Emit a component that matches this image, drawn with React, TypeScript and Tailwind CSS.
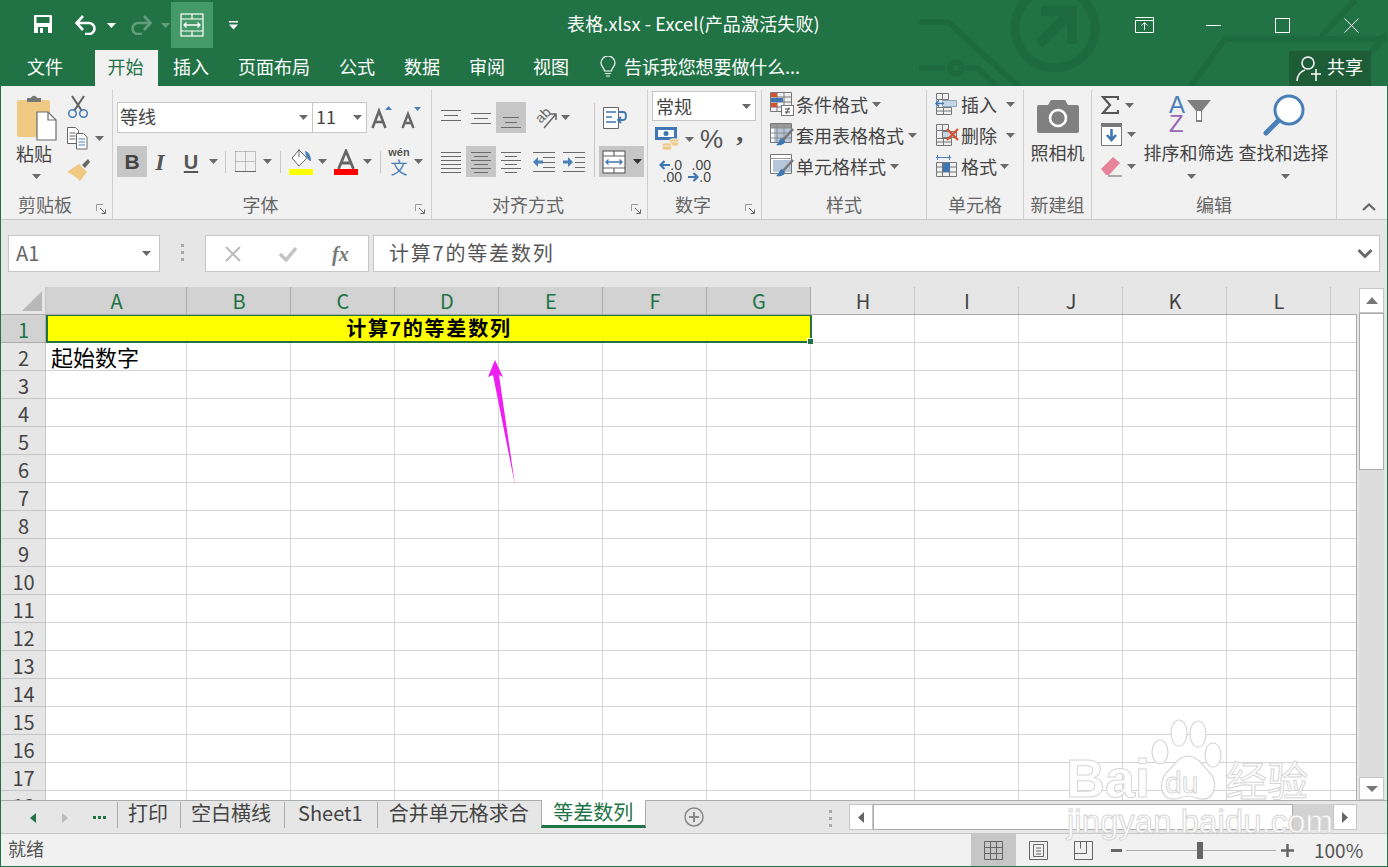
import type { ReactNode } from 'react';

const GREEN = '#217346';

const Caret = ({ className = '', light = false, dark = false }: { className?: string; light?: boolean; dark?: boolean }) => (
  <svg width="9" height="5" viewBox="0 0 9 5" className={`shrink-0 ${className}`}>
    <path d="M0 0h9L4.500 5z" fill={light ? '#ffffff' : dark ? '#333333' : '#6a6a6a'} />
  </svg>
);

const Launcher = () => (
  <svg width="11" height="11" viewBox="0 0 11 11" className="absolute right-[5px] bottom-[4px]" fill="none">
    <path d="M.5 7V.5H7" stroke="#9a9a9a" />
    <path d="M4 4l5 5M5.500 9.500h4v-4" stroke="#666" />
  </svg>
);

const Group = ({ w, label, launcher, children }: { w: string; label: string; launcher?: boolean; children: ReactNode }) => (
  <div className={`relative flex flex-col shrink-0 border-r border-[#cfcfcf] ${w}`}>
    <div className="h-[103px]">{children}</div>
    <div className={`h-[22px] flex items-center justify-center text-[#666] ${launcher ? 'pr-[23px]' : ''}`}>{label}</div>
    {launcher && <Launcher />}
  </div>
);

const MergeIcon = ({ color = '#fff', arrow = '#fff' }: { color?: string; arrow?: string }) => (
  <svg width="24" height="24" viewBox="0 0 24 24" fill="none" className="shrink-0">
    <rect x="1" y="1" width="22" height="22" stroke={color} fill="#fff" fillOpacity={color === '#fff' ? 0 : 1} strokeWidth="1.200" />
    <path d="M1 6h22M1 18h22M12 1v5M12 18v5" stroke={color} strokeWidth="1.200" />
    <path d="M4 12h16M6.500 9.500 4 12l2.500 2.500M17.500 9.500 20 12l-2.500 2.500" stroke={arrow} strokeWidth="1.300" />
  </svg>
);

const Lines = ({ rows }: { rows: [number, number][] }) => (
  <svg width="20" height="22" viewBox="0 0 20 22" fill="none" className="shrink-0">
    {rows.map(([y, x]) => (
      <path key={y} d={`M${x} ${y + 0.5}H${20 - x}`} stroke="#6b6b6b" />
    ))}
  </svg>
);

const Indent = ({ flip = false }: { flip?: boolean }) => (
  <svg width="22" height="22" viewBox="0 0 22 22" fill="none" className="shrink-0">
    <path d={flip ? 'M0 1.500h22M12 6.500h10M12 11.500h10M12 16.500h10M0 20.500h22' : 'M0 1.500h22M10 6.500h12M10 11.500h12M10 16.500h12M0 20.500h22'} stroke="#6b6b6b" />
    <path d={flip ? 'M0 9.500h5V6l5 5-5 5v-3.500H0z' : 'M10 9.500H5V6l-5 5 5 5v-3.500h5z'} fill="#4a7fb8" />
  </svg>
);

const CellIcon = ({ kind }: { kind: 'insert' | 'delete' | 'format' }) => (
  <svg width="24" height="24" viewBox="0 0 24 24" fill="none" className="shrink-0">
    {kind === 'format' ? (
      <>
        <path d="M1 3.500h15M2.500 1v5M14.500 1v5" stroke="#4a7fb8" />
        <path d="M1.500 8.500h20v14h-20zM1.500 13h20M1.500 18h20M7.500 8.500v14M14.500 8.500v14" stroke="#777" />
        <rect x="8" y="9" width="7" height="9" fill="#3f76b4" />
      </>
    ) : (
      <>
        <path d="M1.500 1.500h12v6h-12zM7.500 1.500v6M1.500 15.500h15v7h-15zM1.500 19h15M8.500 15.500v7" stroke="#777" />
        <path d="M7.500 8.500h14v6h-14zM1.500 8v7" stroke={kind === 'insert' ? '#8aa8c8' : '#777'} fill="#c6d6e6" />
        {kind === 'insert' && <path d="M1 11.500h8M4 8.500l-3 3 3 3" stroke="#3f76b4" strokeWidth="1.500" />}
        {kind === 'delete' && <path d="M12 6l11 11M23 6 12 17" stroke="#d8502f" strokeWidth="2.200" />}
      </>
    )}
  </svg>
);

const StyleIcon = ({ kind }: { kind: 'cond' | 'table' | 'cell' }) => (
  <svg width="24" height="24" viewBox="0 0 24 24" fill="none" className="shrink-0">
    {kind === 'cond' && (
      <>
        <path d="M.5.500h21v19H.5zM.5 5h21M.5 10h21M.5 15h21M7 .5v19M14 .5v19" stroke="#777" />
        <rect x="1" y="1" width="6" height="4" fill="#d8502f" />
        <rect x="1" y="6" width="12" height="4" fill="#3f76b4" />
        <rect x="1" y="11" width="6" height="4" fill="#d8502f" />
        <rect x="11.500" y="13.500" width="12" height="10" fill="#fff" stroke="#777" />
        <path d="M15 17h5M15 20h5M19 15.500l-3 6.500" stroke="#444" />
      </>
    )}
    {kind === 'table' && (
      <>
        <path d="M.5.500h21v19H.5z" stroke="#777" fill="#fff" />
        <rect x="1" y="1" width="20" height="4" fill="#999" />
        <rect x="4" y="5" width="17" height="14" fill="#b6c6da" />
        <path d="M.5 5h21M.5 10h21M.5 15h21M7 .5v19M14 .5v19" stroke="#8b8b8b" />
        <path d="M23 6 13 17" stroke="#777" strokeWidth="2.500" />
        <path d="M12 15c-3 1-3 5-6 7 5 1 9-1 9-4z" fill="#3f76b4" />
      </>
    )}
    {kind === 'cell' && (
      <>
        <path d="M.5.500h21v19H.5z" stroke="#777" fill="#fff" />
        <path d="M.5 4.500h21" stroke="#999" />
        <rect x="3" y="6" width="18" height="12" fill="#b6c6da" />
        <path d="M23 6 13 17" stroke="#777" strokeWidth="2.500" />
        <path d="M12 15c-3 1-3 5-6 7 5 1 9-1 9-4z" fill="#3f76b4" />
      </>
    )}
  </svg>
);

const Sep = ({ className = '' }: { className?: string }) => <div className={`w-px shrink-0 bg-[#c6c6c6] ${className}`} />;

const ClipboardGroup = () => (
  <Group w="w-[112px]" label="剪贴板" launcher>
    <div className="flex pl-[15px]">
      <div className="w-[44px] flex flex-col items-start pt-[5px]">
        <svg width="42" height="46" viewBox="0 0 42 46" fill="none" className="shrink-0">
          <rect x="1" y="5" width="33" height="37" rx="2" fill="#f0c983" />
          <path d="M11 7V3h4c1-3 5-3 6 0h4v4z" fill="#777" />
          <path d="M21 17h11l8 8v20H21z" fill="#fff" stroke="#6b6b6b" strokeWidth="1.200" />
          <path d="M32 17v8h8" stroke="#6b6b6b" strokeWidth="1.200" />
        </svg>
        <div className="h-[22px] leading-[24px] text-[#444]">粘贴</div>
        <Caret className="mt-[11px] ml-[16px]" />
      </div>
      <div className="ml-[7px] pt-[5px] flex flex-col">
        <svg width="22" height="23" viewBox="0 0 22 23" fill="none">
          <path d="M5 1l10 15M17 1 7 16" stroke="#666" strokeWidth="2.200" />
          <circle cx="5.500" cy="18.500" r="3.800" stroke="#4a7fb8" strokeWidth="1.600" />
          <circle cx="16.500" cy="18.500" r="3.800" stroke="#4a7fb8" strokeWidth="1.600" />
        </svg>
        <div className="mt-[9px] flex items-center">
          <svg width="21" height="23" viewBox="0 0 21 23" fill="none">
            <path d="M.5.500h8l3 3v13H.5zM2.500 6h6M2.500 9h6M2.500 12h6" stroke="#666" fill="#fff" />
            <path d="M9.500 6.500h7l3.500 3.500v12H9.500z" stroke="#666" fill="#fff" />
            <path d="M11.500 12h6.500M11.500 15h6.500M11.500 18h6.500" stroke="#4a7fb8" />
          </svg>
          <Caret className="ml-[7px]" />
        </div>
        <svg width="24" height="22" viewBox="0 0 24 22" fill="none" className="mt-[9px]">
          <path d="M15 6l6-6 2 3-5 6z" fill="#666" />
          <path d="M0 13 12 5l8 8-7 9C10 19 5 15 0 13z" fill="#f0c983" />
        </svg>
      </div>
    </div>
  </Group>
);

const FontGroup = () => (
  <Group w="w-[319px]" label="字体" launcher>
    <div className="pl-[4px] pt-[12px]">
      <div className="flex items-center h-[31px]">
        <div className="w-[196px] h-[31px] bg-white border border-[#c6c6c6] flex items-center pl-[2px] pr-[4px] justify-between text-[#444]">
          <span className="-mt-[2px]">等线</span>
          <Caret />
        </div>
        <div className="w-[55px] -ml-px h-[31px] bg-white border border-[#c6c6c6] flex items-center pl-[3px] pr-[4px] justify-between text-[#444]">
          <span className="-mt-[2px]">11</span>
          <Caret />
        </div>
        <svg width="22" height="24" viewBox="0 0 22 24" className="ml-[4px] shrink-0" fill="none">
          <path d="M1.500 22 8 5l6.500 17M4 16h8" stroke="#666" strokeWidth="2.600" />
          <path d="M14 4l3.500-4L21 4z" fill="#4a7fb8" />
        </svg>
        <svg width="22" height="22" viewBox="0 0 22 22" className="ml-[8px] shrink-0" fill="none">
          <path d="M1.500 21 7 7l5.500 14M3.500 16h7" stroke="#666" strokeWidth="2.400" />
          <path d="M13 0h7l-3.500 4z" fill="#4a7fb8" />
        </svg>
      </div>
      <div className="flex items-center h-[31px] mt-[13px]">
        <div className="w-[30px] h-[31px] bg-[#c6c6c6] flex items-center justify-center font-bold text-[#444] text-[21px] font-['Liberation_Sans',sans-serif]">B</div>
        <div className="w-[26px] text-center italic font-bold text-[#555] text-[24px] leading-none font-['Liberation_Serif',serif]">I</div>
        <div className="w-[36px] text-center text-[#555] text-[20px] font-bold font-['Liberation_Sans',sans-serif] underline underline-offset-2">U</div>
        <Caret />
        <Sep className="ml-[7px] h-[22px]" />
        <svg width="21" height="21" viewBox="0 0 21 21" fill="none" className="ml-[9px] shrink-0">
          <path d="M.5.500h20M.5 10.500h20M10.500.5v20M.5.5v20M20.500.5v20" stroke="#888" strokeDasharray="1 1" />
          <path d="M0 20.500h21" stroke="#666" />
        </svg>
        <Caret className="ml-[7px]" />
        <Sep className="ml-[8px] h-[22px]" />
        <div className="ml-[8px] w-[24px] flex flex-col items-center">
          <svg width="24" height="20" viewBox="0 0 24 20" fill="none">
            <path d="M10 1 3 9l7 8 8-8z" fill="#fff" stroke="#666" />
            <path d="M10 0v8" stroke="#666" />
            <path d="M16 2c4 1 6 5 6 10-3 0-3-3-5-5z" fill="#4a7fb8" />
          </svg>
          <div className="w-[24px] h-[6px] bg-[#ffff00]" />
        </div>
        <Caret className="ml-[5px]" />
        <div className="ml-[7px] w-[24px] flex flex-col items-center">
          <svg width="20" height="20" viewBox="0 0 20 20" fill="none">
            <path d="M2.500 20 10 2l7.500 18M5 14h10" stroke="#666" strokeWidth="2.800" />
          </svg>
          <div className="w-[24px] h-[6px] bg-[#ff0000]" />
        </div>
        <Caret className="ml-[5px]" />
        <Sep className="ml-[8px] h-[22px]" />
        <div className="ml-[6px] w-[24px] flex flex-col items-center leading-none">
          <span className="text-[11px] text-[#555] font-bold leading-[11px] font-['Liberation_Sans',sans-serif]">wén</span>
          <span className="text-[17px] text-[#4a7fb8] leading-[18px]">文</span>
        </div>
        <Caret className="ml-[3px]" />
      </div>
    </div>
  </Group>
);

const AlignGroup = () => (
  <Group w="w-[216px]" label="对齐方式" launcher>
    <div className="flex pt-[12px]">
      <div className="w-[162px] pl-[9px] shrink-0">
        <div className="flex items-center h-[31px]">
          <div className="w-[20px]"><Lines rows={[[3, 0], [8, 3], [13, 0]]} /></div>
          <div className="w-[20px] ml-[10px]"><Lines rows={[[6, 0], [11, 3], [16, 0]]} /></div>
          <div className="w-[30px] h-[31px] ml-[5px] bg-[#c6c6c6] flex items-center justify-center"><Lines rows={[[10, 2], [15, 4], [20, 0]]} /></div>
          <div className="relative ml-[9px] w-[22px] h-[22px] shrink-0">
            <span className="absolute left-[0px] top-[0px] -rotate-45 text-[14px] leading-[16px] text-[#666] font-['Liberation_Sans',sans-serif]">ab</span>
            <svg width="22" height="22" viewBox="0 0 22 22" fill="none" className="absolute inset-0">
              <path d="M9 21 21 7M15 7h6v6" stroke="#666" strokeWidth="1.500" />
            </svg>
          </div>
          <Caret className="ml-[4px]" />
        </div>
        <div className="flex items-center h-[31px] mt-[13px]">
          <Lines rows={[[1, 0], [5, 0], [9, 0], [13, 0], [17, 0], [21, 0]]} />
          <div className="w-[30px] h-[31px] ml-[5px] bg-[#c6c6c6] flex items-center justify-center">
            <Lines rows={[[1, 0], [5, 3], [9, 0], [13, 3], [17, 0], [21, 3]]} />
          </div>
          <div className="ml-[5px]"><Lines rows={[[1, 0], [5, 4], [9, 0], [13, 4], [17, 0], [21, 4]]} /></div>
          <div className="ml-[12px]"><Indent /></div>
          <div className="ml-[8px]"><Indent flip /></div>
        </div>
      </div>
      <Sep className="h-[74px] mt-[1px]" />
      <div className="ml-[4px] flex flex-col items-start">
        <svg width="24" height="24" viewBox="0 0 24 24" fill="none" className="ml-[4px] mt-[4px]">
          <path d="M.5 1.500h15v21H.5z" stroke="#666" fill="#fff" />
          <path d="M3 6h10M3 11h6M3 16h10" stroke="#3f76b4" strokeWidth="1.500" />
          <path d="M15 6h5c4 0 4 8 0 8h-5M18 11l-3 3 3 3" stroke="#3f76b4" strokeWidth="1.800" />
        </svg>
        <div className="w-[45px] h-[31px] mt-[16px] bg-[#c6c6c6] flex items-center pl-[3px]">
          <MergeIcon color="#666" arrow="#3f76b4" />
          <Caret dark className="ml-[7px]" />
        </div>
      </div>
    </div>
  </Group>
);

const DecimalArrow = ({ flip = false }: { flip?: boolean }) => (
  <svg width="11" height="10" viewBox="0 0 11 10" fill="none" className="shrink-0" stroke="#3f76b4" strokeWidth="2.200">
    <path d={flip ? 'M0 5h9M5.500 1 9.500 5l-4 4' : 'M11 5H2M5.500 1 1.500 5l4 4'} />
  </svg>
);

const NumberGroup = () => (
  <Group w="w-[114px]" label="数字" launcher>
    <div className="pl-[4px] pt-[1px]">
      <div className="w-[104px] h-[30px] bg-white border border-[#c6c6c6] flex items-center justify-between pl-[3px] pr-[4px] text-[#444]">
        常规
        <Caret />
      </div>
      <div className="flex items-center h-[26px] mt-[5px]">
        <svg width="25" height="24" viewBox="0 0 25 24" fill="none" className="ml-[3px] shrink-0">
          <rect x="0" y="0" width="22" height="13" fill="#3f76b4" />
          <rect x="3" y="3" width="16" height="7" fill="#fff" />
          <circle cx="11" cy="6.500" r="2.500" fill="#3f76b4" />
          <ellipse cx="19" cy="14" rx="5" ry="2.200" fill="#f0c983" stroke="#f1f1f1" />
          <ellipse cx="19" cy="17" rx="5" ry="2.200" fill="#f0c983" stroke="#f1f1f1" />
          <ellipse cx="12" cy="18" rx="5" ry="2.200" fill="#f0c983" stroke="#f1f1f1" />
          <ellipse cx="12" cy="21" rx="5" ry="2.200" fill="#f0c983" stroke="#f1f1f1" />
        </svg>
        <Caret className="ml-[5px]" />
        <span className="ml-[6px] text-[26px] leading-[26px] text-[#555] font-['Liberation_Sans',sans-serif]">%</span>
        <span className="ml-[13px] -mt-[14px] text-[28px] leading-[26px] font-bold text-[#555] font-['Liberation_Serif',serif]">,</span>
      </div>
      <div className="flex mt-[7px] text-[14px] leading-[12px] text-[#444] font-['Liberation_Sans',sans-serif]">
        <div className="ml-[4px] w-[26px] flex flex-col items-end">
          <div className="flex items-center h-[12px]"><DecimalArrow />.0</div>
          <div className="h-[12px]">.00</div>
        </div>
        <div className="ml-[5px] w-[24px] flex flex-col items-end">
          <div className="h-[12px]">.00</div>
          <div className="flex items-center h-[12px]"><DecimalArrow flip />.0</div>
        </div>
      </div>
    </div>
  </Group>
);

const StylesGroup = () => (
  <Group w="w-[165px]" label="样式">
    <div className="pl-[8px] pt-[2px] flex flex-col gap-[7px] text-[#444]">
      <div className="flex items-center h-[24px]"><StyleIcon kind="cond" /><span className="ml-[2px]">条件格式</span><Caret className="ml-[4px]" /></div>
      <div className="flex items-center h-[24px]"><StyleIcon kind="table" /><span className="ml-[2px]">套用表格格式</span><Caret className="ml-[4px]" /></div>
      <div className="flex items-center h-[24px]"><StyleIcon kind="cell" /><span className="ml-[2px]">单元格样式</span><Caret className="ml-[4px]" /></div>
    </div>
  </Group>
);

const CellsGroup = () => (
  <Group w="w-[97px]" label="单元格">
    <div className="pl-[8px] pt-[2px] flex flex-col gap-[7px] text-[#444]">
      <div className="flex items-center h-[24px]"><CellIcon kind="insert" /><span className="ml-[2px]">插入</span><Caret className="ml-[9px]" /></div>
      <div className="flex items-center h-[24px]"><CellIcon kind="delete" /><span className="ml-[2px]">删除</span><Caret className="ml-[9px]" /></div>
      <div className="flex items-center h-[24px]"><CellIcon kind="format" /><span className="ml-[2px]">格式</span><Caret className="ml-[3px]" /></div>
    </div>
  </Group>
);

const CameraGroup = () => (
  <Group w="w-[68px]" label="新建组">
    <div className="flex flex-col items-center pt-[10px] text-[#444]">
      <svg width="42" height="33" viewBox="0 0 42 33" fill="none">
        <path d="M2 5h9l3-5h14l3 5h9a2 2 0 0 1 2 2v24a2 2 0 0 1-2 2H2a2 2 0 0 1-2-2V7a2 2 0 0 1 2-2z" fill="#808080" />
        <circle cx="21" cy="18" r="8" fill="none" stroke="#fff" strokeWidth="2.600" />
      </svg>
      <span className="mt-[8px] h-[22px] leading-[22px]">照相机</span>
    </div>
  </Group>
);

const EditGroup = () => (
  <Group w="w-[245px]" label="编辑">
    <div className="flex text-[#444]">
      <div className="pl-[9px] pt-[5px] w-[50px] shrink-0">
        <div className="flex items-center h-[20px]">
          <svg width="18" height="18" viewBox="0 0 18 18" fill="none"><path d="M17 4V1H2l7 8-7 8h15v-3" stroke="#555" strokeWidth="2.200" /></svg>
          <Caret className="ml-[6px]" />
        </div>
        <div className="flex items-center mt-[8px] h-[23px]">
          <svg width="22" height="23" viewBox="0 0 22 23" fill="none">
            <path d="M.5 3.500h20v19H.5z" fill="#fff" stroke="#777" />
            <rect x="0" y="0" width="21" height="3" fill="#777" />
            <path d="M10.500 6v11M6 12l4.500 5 4.500-5" stroke="#3f76b4" strokeWidth="2.600" />
          </svg>
          <Caret className="ml-[4px]" />
        </div>
        <div className="flex items-center mt-[9px] h-[22px]">
          <svg width="21" height="21" viewBox="0 0 21 21" fill="none">
            <path d="M0 13 12 1l7 6L8 19H5z" fill="#e8849a" />
            <path d="M7 20h14" stroke="#666" />
          </svg>
          <Caret className="ml-[5px]" />
        </div>
      </div>
      <div className="w-[93px] flex flex-col items-center pt-[4px] shrink-0">
        <div className="flex items-center h-[40px] pl-[3px]">
          <div className="flex flex-col leading-[19px] text-[24px] font-['Liberation_Sans',sans-serif]">
            <span className="text-[#4a7fb8]">A</span>
            <span className="text-[#9b65b5]">Z</span>
          </div>
          <svg width="24" height="24" viewBox="0 0 24 24" className="ml-[2px] mb-[6px]" fill="#808080"><path d="M0 1h24l-9 11v11H9V12z" /><path d="M10 12h4v9h-4z" fill="#fff" /></svg>
        </div>
        <span className="mt-[7px] h-[22px] leading-[22px] whitespace-nowrap">排序和筛选</span>
        <Caret className="mt-[11px] ml-[6px]" />
      </div>
      <div className="w-[95px] flex flex-col items-center pt-[4px] shrink-0">
        <svg width="42" height="42" viewBox="0 0 42 42" fill="none" className="ml-[2px]">
          <circle cx="26" cy="16" r="14" fill="#fff" stroke="#4a7fb8" strokeWidth="3" />
          <path d="M15 27 3 39" stroke="#4a7fb8" strokeWidth="5" strokeLinecap="round" />
        </svg>
        <span className="mt-[5px] ml-[2px] h-[22px] leading-[22px] whitespace-nowrap">查找和选择</span>
        <Caret className="mt-[11px] ml-[6px]" />
      </div>
    </div>
  </Group>
);

const Ribbon = () => (
  <div className="h-[134px] shrink-0 bg-[#f1f1f1] border-b border-[#c6c6c6] pt-[4px] flex text-[18px] relative">
    <ClipboardGroup />
    <FontGroup />
    <AlignGroup />
    <NumberGroup />
    <StylesGroup />
    <CellsGroup />
    <CameraGroup />
    <EditGroup />
    <svg width="14" height="8" viewBox="0 0 14 8" fill="none" className="ml-[25px] mt-[113px]">
      <path d="M1 7l6-5.500L13 7" stroke="#666" strokeWidth="2.200" />
    </svg>
  </div>
);

const Header = () => (
  <div className="relative h-[86px] shrink-0 overflow-hidden text-white text-[18px]" style={{ backgroundColor: GREEN }}>
    <svg width="468" height="86" viewBox="920 0 468 86" fill="none" className="absolute right-0 top-0" stroke="#1e6a40" strokeWidth="6">
      <circle cx="1056" cy="28" r="40" strokeWidth="9" />
      <path d="M1042 11h31v33" strokeWidth="10" />
      <path d="M1073 11l-33 33" strokeWidth="10" />
      <path d="M920 22h29l70 64" />
      <path d="M920 68h26M966 68h12l20 18" />
      <circle cx="957" cy="68" r="6" />
      <path d="M1192 86l34-47h162" />
      <path d="M1320 39l36-39M1342 86l46-52" />
    </svg>
    <div className="relative flex items-center h-[50px]">
      <svg width="20" height="20" viewBox="0 0 20 20" className="ml-[32px] -mt-[3px] shrink-0">
        <path d="M1 2a1 1 0 0 1 1-1h16a1 1 0 0 1 1 1v17H1z" fill="#fff" />
        <rect x="3.500" y="3" width="13" height="6" fill={GREEN} />
        <rect x="5" y="13" width="10" height="6" fill={GREEN} />
        <rect x="7" y="14" width="3" height="5" fill="#fff" />
      </svg>
      <svg width="22" height="20" viewBox="0 0 22 20" fill="none" className="ml-[22px] shrink-0">
        <path d="M2 8h12a5.500 5.500 0 0 1 0 11h-4" stroke="#fff" strokeWidth="2.600" />
        <path d="M8 1 1.500 8 8 15" stroke="#fff" strokeWidth="2.600" />
      </svg>
      <Caret light className="ml-[10px]" />
      <svg width="22" height="20" viewBox="0 0 22 20" fill="none" className="ml-[14px] shrink-0 opacity-30">
        <path d="M20 8H8a5.500 5.500 0 0 0 0 11h4" stroke="#fff" strokeWidth="2.600" />
        <path d="M14 1l6.500 7L14 15" stroke="#fff" strokeWidth="2.600" />
      </svg>
      <Caret light className="ml-[9px] opacity-30" />
      <div className="ml-[1px] w-[42px] h-[46px] bg-[#459a6a] flex items-center justify-center shrink-0">
        <MergeIcon />
      </div>
      <svg width="9" height="9" viewBox="0 0 9 9" className="ml-[16px] shrink-0" fill="#fff">
        <rect x="0" y="0" width="9" height="1.500" />
        <path d="M0 3.500h9L4.500 8.500z" />
      </svg>
      <div className="ml-[329px] -mt-[3px] whitespace-nowrap tracking-[0.15px]">表格.xlsx - Excel(产品激活失败)</div>
      <svg width="20" height="16" viewBox="0 0 20 16" fill="none" className="ml-auto shrink-0" stroke="#fff">
        <path d="M.5 3.500h18v12H.5zM.5.500h18v3M9.500 13V6M6.500 8.500l3-3 3 3" />
      </svg>
      <div className="ml-[51px] w-[15px] h-px bg-white shrink-0" />
      <div className="ml-[54px] w-[15px] h-[15px] border border-white shrink-0" />
      <svg width="15" height="15" viewBox="0 0 15 15" fill="none" className="ml-[54px] mr-[28px] shrink-0" stroke="#fff">
        <path d="M.5.500l14 14M14.500.5l-14 14" />
      </svg>
    </div>
    <div className="relative flex h-[36px] items-center">
      <span className="ml-[26px] mb-[3px]">文件</span>
      <div className="ml-[32px] w-[63px] h-[36px] bg-[#f1f1f1] flex items-center justify-center pb-[3px] pr-[2px]" style={{ color: GREEN }}>开始</div>
      <span className="ml-[15px] mb-[3px]">插入</span>
      <span className="ml-[29px] mb-[3px]">页面布局</span>
      <span className="ml-[29px] mb-[3px]">公式</span>
      <span className="ml-[29px] mb-[3px]">数据</span>
      <span className="ml-[29px] mb-[3px]">审阅</span>
      <span className="ml-[28px] mb-[3px]">视图</span>
      <svg width="16" height="22" viewBox="0 0 16 22" fill="none" className="ml-[31px] mb-[3px] shrink-0" stroke="#fff" strokeWidth="1.200">
        <path d="M4.500 15c0-3-3.500-4.500-3.500-8a7 7 0 0 1 14 0c0 3.500-3.500 5-3.500 8zM5 17.500h6M6 20h4" />
      </svg>
      <span className="ml-[8px] mb-[3px] whitespace-nowrap tracking-[-0.1px]">告诉我您想要做什么...</span>
      <div className="ml-auto mr-[16px] w-[82px] h-[35px] bg-[#1e5c38] flex items-center pl-[7px]">
        <svg width="26" height="28" viewBox="0 0 26 28" fill="none" stroke="#fff" strokeWidth="1.500" className="shrink-0">
          <circle cx="12" cy="9" r="6" />
          <path d="M1 27c0-6 4-10 8-11M15 20h10M20 15v12" />
        </svg>
        <span className="ml-[5px] mb-[3px]">共享</span>
      </div>
    </div>
  </div>
);

const FormulaBar = () => (
  <div className="h-[67px] shrink-0 bg-[#e6e6e6] pt-[15px] flex items-start text-[20px] text-[#555]">
    <div className="ml-[7px] w-[152px] h-[37px] bg-white border border-[#c6c6c6] flex items-center justify-between pl-[7px] pr-[8px] text-[#666] shrink-0">
      <span className="-mt-[2px]">A1</span>
      <Caret />
    </div>
    <div className="ml-[21px] mt-[9px] w-[3px] h-[17px] flex flex-col justify-between shrink-0">
      <div className="h-[3px] bg-[#aaa]" />
      <div className="h-[3px] bg-[#aaa]" />
      <div className="h-[3px] bg-[#aaa]" />
    </div>
    <div className="ml-[21px] w-[164px] h-[37px] bg-white border border-[#c6c6c6] flex items-center shrink-0">
      <svg width="18" height="18" viewBox="0 0 18 18" className="ml-[18px]" stroke="#bbb" strokeWidth="2"><path d="M2 2l14 14M16 2 2 16" /></svg>
      <svg width="20" height="18" viewBox="0 0 20 18" className="ml-[36px]" fill="none" stroke="#c4c4c4" strokeWidth="3.500"><path d="M2 9l6 6L18 3" /></svg>
      <span className="ml-[34px] italic font-bold text-[#777] font-['Liberation_Serif',serif]">fx</span>
    </div>
    <div className="ml-[4px] w-[1007px] h-[37px] bg-white border border-[#c6c6c6] flex items-center justify-between pl-[15px] pr-[6px] shrink-0 tracking-[1.800px]">
      <span className="-mt-[2px]">计算7的等差数列</span>
      <svg width="16" height="11" viewBox="0 0 16 11" fill="none" stroke="#6a6a6a" strokeWidth="3"><path d="M1.500 2 8 8.500 14.500 2" /></svg>
    </div>
  </div>
);

const COLUMNS = ['A', 'B', 'C', 'D', 'E', 'F', 'G', 'H', 'I', 'J', 'K', 'L'];
const ROWS = Array.from({ length: 18 }, (_, i) => i + 1);

const ColumnHeaders = () => (
  <div className="h-[27px] flex bg-[#e6e6e6] text-[20px] text-[#444] leading-[27px]">
    <div className="w-[45px] h-[27px] flex items-end justify-end pr-[3px] pb-[3px] shrink-0 border-r border-[#c6c6c6]">
      <div className="w-[20px] h-[20px] bg-[#b8b8b8] [clip-path:polygon(100%_0,100%_100%,0_100%)]" />
    </div>
    {COLUMNS.map((c, i) => (
      <div
        key={c}
        className={`${i === 0 ? 'w-[141px]' : 'w-[104px]'} shrink-0 text-center pl-[1px] border-r ${i < 7 ? 'bg-[#d2d2d2] text-[#217346] border-[#ababab]' : 'border-[#c6c6c6]'}`}
      >
        {c}
      </div>
    ))}
  </div>
);

const Cell = ({ wide, children }: { wide?: boolean; children?: ReactNode }) => (
  <div className={`${wide ? 'w-[141px]' : 'w-[104px]'} h-[28px] shrink-0 border-r border-b border-[#d4d4d4] overflow-visible whitespace-nowrap`}>
    {children}
  </div>
);

const Sheet = () => (
  <div className="flex h-[513px] shrink-0 bg-[#e6e6e6] overflow-hidden">
    <div className="w-[1356px] shrink-0">
      <ColumnHeaders />
      <div className="h-[486px] bg-white border-t border-r border-[#ababab] overflow-hidden">
        {ROWS.map((r) => (
          <div key={r} className="flex h-[28px]">
            <div
              className={`w-[45px] h-[28px] shrink-0 text-center pl-[1px] text-[20px] leading-[30px] border-r border-b ${
                r === 1 ? 'bg-[#d2d2d2] text-[#217346] border-[#ababab]' : 'bg-[#e6e6e6] text-[#444] border-[#c6c6c6]'
              }`}
            >
              {r}
            </div>
            {r === 1 ? (
              <div className="relative w-[766px] h-[29px] -mt-px -mr-px shrink-0 bg-[#ffff00] border-2 border-[#217346] flex items-center justify-center font-bold text-[20px] text-black tracking-[1.800px] font-['Liberation_Sans','Noto_Sans_CJK_SC',sans-serif]">
                计算7的等差数列
                <div className="absolute -right-[4px] -bottom-[4px] w-[7px] h-[7px] bg-[#217346] border border-white" />
              </div>
            ) : (
              COLUMNS.slice(0, 7).map((c, i) => (
                <Cell key={c} wide={i === 0}>
                  {r === 2 && i === 0 && <span className="pl-[5px] text-[22px] leading-[26px] text-black">起始数字</span>}
                </Cell>
              ))
            )}
            {COLUMNS.slice(7).map((c) => (
              <Cell key={c} />
            ))}
            <div className="flex-1 h-[28px] border-b border-[#d4d4d4]" />
          </div>
        ))}
      </div>
    </div>
    <div className="w-[30px] shrink-0 pt-[1px] pl-[2px] flex flex-col">
      <div className="w-[25px] bg-[#dcdcdc] flex-1 flex flex-col">
        <div className="h-[25px] bg-white border border-[#c6c6c6] flex items-center justify-center shrink-0">
          <svg width="12" height="7" viewBox="0 0 12 7"><path d="M0 7h12L6 0z" fill="#777" /></svg>
        </div>
        <div className="h-[157px] bg-white border border-[#ababab] shrink-0" />
        <div className="flex-1" />
        <div className="h-[23px] bg-white border border-[#c6c6c6] flex items-center justify-center shrink-0">
          <svg width="12" height="6" viewBox="0 0 12 6"><path d="M0 0h12L6 6z" fill="#777" /></svg>
        </div>
      </div>
    </div>
  </div>
);

const TabSep = ({ className }: { className: string }) => <div className={`w-px h-[26px] bg-[#ababab] shrink-0 ${className}`} />;

const SheetTabs = () => (
  <div className="h-[33px] shrink-0 bg-[#e6e6e6] border-t border-[#ababab] flex items-start text-[20px] leading-[24px] text-[#444]">
    <svg width="6" height="10" viewBox="0 0 6 10" className="ml-[29px] mt-[12px] shrink-0"><path d="M6 0v10L0 5z" fill={GREEN} /></svg>
    <svg width="6" height="10" viewBox="0 0 6 10" className="ml-[26px] mt-[12px] shrink-0"><path d="M0 0v10l6-5z" fill="#bbb" /></svg>
    <div className="ml-[25px] mt-[15px] flex gap-[2px] shrink-0">
      <div className="w-[3px] h-[3px] bg-[#217346]" />
      <div className="w-[3px] h-[3px] bg-[#217346]" />
      <div className="w-[3px] h-[3px] bg-[#217346]" />
    </div>
    <TabSep className="ml-[11px] mt-[1px]" />
    <span className="ml-[10px] shrink-0">打印</span>
    <TabSep className="ml-[12px] mt-[1px]" />
    <span className="ml-[10px] shrink-0">空白横线</span>
    <TabSep className="ml-[13px] mt-[1px]" />
    <span className="ml-[13px] shrink-0">Sheet1</span>
    <TabSep className="ml-[14px] mt-[1px]" />
    <span className="ml-[11px] shrink-0">合并单元格求合</span>
    <div className="ml-[12px] w-[105px] h-[28px] -mt-px bg-white border-x border-[#ababab] border-b-[3px] border-b-[#217346] text-center text-[#217346] shrink-0">等差数列</div>
    <svg width="20" height="20" viewBox="0 0 20 20" fill="none" className="ml-[38px] mt-[6px] shrink-0" stroke="#888">
      <circle cx="10" cy="10" r="9" strokeWidth="1.500" />
      <path d="M10 5v10M5 10h10" strokeWidth="2" />
    </svg>
    <div className="ml-[125px] mt-[9px] w-[3px] h-[17px] flex flex-col justify-between shrink-0">
      <div className="h-[3px] bg-[#aaa]" />
      <div className="h-[3px] bg-[#aaa]" />
      <div className="h-[3px] bg-[#aaa]" />
    </div>
    <div className="ml-[17px] mt-[3px] w-[508px] h-[26px] flex bg-[#d2d2d2] shrink-0">
      <div className="w-[24px] h-[26px] bg-white border border-[#c6c6c6] flex items-center justify-center shrink-0">
        <svg width="6" height="11" viewBox="0 0 6 11"><path d="M6 0v11L0 5.500z" fill="#666" /></svg>
      </div>
      <div className="w-[420px] h-[26px] bg-white border border-[#ababab] shrink-0" />
      <div className="flex-1" />
      <div className="w-[24px] h-[26px] bg-white border border-[#c6c6c6] flex items-center justify-center shrink-0">
        <svg width="6" height="11" viewBox="0 0 6 11"><path d="M0 0v11l6-5.500z" fill="#666" /></svg>
      </div>
    </div>
  </div>
);

const StatusBar = () => (
  <div className="h-[33px] shrink-0 bg-[#f1f1f1] border-t border-[#c6c6c6] flex items-center text-[18px] text-[#555]">
    <span className="ml-[7px] mb-[3px]">就绪</span>
    <div className="ml-[927px] w-[45px] h-[32px] bg-[#c6c6c6] flex items-center justify-center shrink-0">
      <svg width="19" height="19" viewBox="0 0 19 19" fill="none" stroke="#666"><path d="M.5.500h18v18H.5zM.5 6.500h18M.5 12.500h18M6.500.5v18M12.500.5v18" /></svg>
    </div>
    <svg width="19" height="19" viewBox="0 0 19 19" fill="none" stroke="#666" className="ml-[13px] shrink-0"><path d="M.5.500h18v18H.5zM4.500 3.500h10v12h-10zM7 7h5M7 10h5M7 13h5" /></svg>
    <svg width="19" height="19" viewBox="0 0 19 19" fill="none" stroke="#666" className="ml-[26px] shrink-0"><path d="M.5.500h18v18H.5zM.5 12.500h12V.5M6.500.5v7" /></svg>
    <div className="ml-[18px] w-[11px] h-[3px] bg-[#666] shrink-0" />
    <div className="relative ml-[4px] w-[150px] h-px bg-[#aaa] shrink-0">
      <div className="absolute left-[71px] -top-[8px] w-[6px] h-[17px] bg-[#666]" />
    </div>
    <svg width="13" height="13" viewBox="0 0 13 13" className="ml-[5px] shrink-0" stroke="#666" strokeWidth="2.500"><path d="M6.500 0v13M0 6.500h13" /></svg>
    <span className="ml-[20px] mb-[2px] text-[19px] leading-none">100%</span>
  </div>
);

export default function App() {
  return (
    <div className="relative w-[1388px] h-[867px] overflow-hidden border-x border-b border-[#217346] bg-white font-['Noto_Sans_CJK_SC','Liberation_Sans',sans-serif]">
      <Header />
      <Ribbon />
      <FormulaBar />
      <Sheet />
      <SheetTabs />
      <StatusBar />

      {/* annotation arrow drawn over the sheet */}
      <svg width="40" height="130" viewBox="485 358 40 130" className="absolute left-[484px] top-[358px]">
        <path d="M495 360l8 17-4-2 16 110-22-110-5 2z" fill="#f01ef0" />
      </svg>

      {/* baidu watermark */}
      <div className="absolute left-[1065px] top-[718px] w-[300px] h-[130px] text-white [-webkit-text-stroke:1px_#d6d6d6] font-['Liberation_Sans',sans-serif]">
        <svg width="90" height="90" viewBox="0 0 90 90" fill="#fff" stroke="#d6d6d6" strokeWidth="1.200" className="absolute left-[78px] top-[0px]">
          <ellipse cx="35" cy="15" rx="8" ry="13" />
          <ellipse cx="54" cy="16" rx="8" ry="13" />
          <ellipse cx="16" cy="34" rx="8" ry="12" />
          <ellipse cx="69" cy="37" rx="8" ry="12" />
          <path d="M44 38c10 0 14 9 22 17 8 9 5 27-8 26-5 0-9-3-14-3s-10 4-16 3C16 80 14 63 24 53c7-6 10-15 20-15z" />
        </svg>
        <span className="absolute left-[0px] top-[34px] text-[54px] leading-[52px] font-bold">Bai</span>
        <span className="absolute left-[99px] top-[50px] text-[30px] leading-[30px]">du</span>
        <span className="absolute left-[160px] top-[38px] text-[41px] leading-[44px] whitespace-nowrap font-['Noto_Sans_CJK_SC',sans-serif]">经验</span>
        <span className="absolute left-[1px] top-[86px] text-[33px] leading-[36px] whitespace-nowrap">jingyan.baidu.com</span>
      </div>
    </div>
  );
}
